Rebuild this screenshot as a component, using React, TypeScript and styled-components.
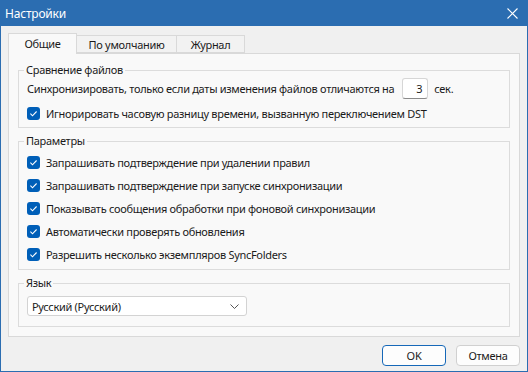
import React from 'react'
import styled, { createGlobalStyle } from 'styled-components'

const GlobalStyle = createGlobalStyle`
  html, body {
    margin: 0;
    padding: 0;
    background: #f0f0f0;
  }
  body {
    font-family: "Noto Sans", "Open Sans", sans-serif;
    font-size: 11px;
    letter-spacing: -0.3px;
    color: #1b1b1b;
  }
`

const Window = styled.div`
  width: 528px;
  height: 372px;
  box-sizing: border-box;
  display: flex;
  flex-direction: column;
  background: #f0f0f0;
  border: 1px solid #2b6db1;
  border-top: none;
`

const TitleBar = styled.div`
  height: 26px;
  margin: 0 -1px;
  padding: 0 10px 0 5px;
  display: flex;
  align-items: center;
  justify-content: space-between;
  background: #2b6db1;
  color: #fff;
  font-size: 12px;
  letter-spacing: -0.2px;
`

const CloseIcon = () => (
  <svg width="11" height="11" viewBox="0 0 11 11">
    <path d="M0.5 0.5 L10.5 10.5 M10.5 0.5 L0.5 10.5" stroke="#fff" strokeWidth="1.1" />
  </svg>
)

const Client = styled.div`
  flex: 1;
  padding: 7px 7px 0 7px;
  display: flex;
  flex-direction: column;
`

const TabStrip = styled.div`
  display: flex;
  align-items: flex-end;
  height: 20px;
  position: relative;
  z-index: 1;
`

const Tab = styled.div<{ $active?: boolean; $width: number }>`
  box-sizing: border-box;
  width: ${(p) => p.$width}px;
  height: ${(p) => (p.$active ? 21 : 18)}px;
  margin-bottom: ${(p) => (p.$active ? -1 : 0)}px;
  display: flex;
  align-items: center;
  justify-content: center;
  padding-bottom: ${(p) => (p.$active ? 1 : 0)}px;
  background: ${(p) => (p.$active ? '#f9f9f9' : '#f2f2f2')};
  border: 1px solid #d9d9d9;
  border-bottom: ${(p) => (p.$active ? 'none' : '1px solid #d9d9d9')};
  border-left: ${(p) => (p.$active ? '1px solid #d9d9d9' : 'none')};
  color: #1b1b1b;
`

const Panel = styled.div`
  box-sizing: border-box;
  height: 284px;
  padding: 9px 9px;
  background: #f9f9f9;
  border: 1px solid #d9d9d9;
  display: flex;
  flex-direction: column;
  gap: 6px;
`

const Group = styled.fieldset<{ $padTop?: number; $padBottom?: number }>`
  margin: 0;
  min-width: 0;
  padding: ${(p) => p.$padTop ?? 0}px 8px ${(p) => p.$padBottom ?? 2}px 8px;
  border: 1px solid #dcdcdc;
  display: flex;
  flex-direction: column;
`

const Caption = styled.legend`
  padding: 0 2px;
  margin-left: -3px;
  line-height: 14px;
`

const Row = styled.div<{ $gapTop?: number }>`
  height: 23px;
  margin-top: ${(p) => p.$gapTop ?? 0}px;
  display: flex;
  align-items: center;
  gap: 6px;
  white-space: nowrap;
`

const NumberBox = styled.div`
  box-sizing: border-box;
  width: 26px;
  height: 21px;
  margin-left: 2px;
  padding-right: 5px;
  display: flex;
  align-items: center;
  justify-content: flex-end;
  background: #fff;
  border: 1px solid #d6d6d6;
  border-bottom-color: #8a8a8a;
  border-radius: 3px;
`

const Box = styled.span`
  width: 13px;
  height: 13px;
  flex: none;
  border-radius: 3px;
  background: #005fb8;
  display: flex;
  align-items: center;
  justify-content: center;
`

const Check = ({ label }: { label: string }) => (
  <>
    <Box>
      <svg width="13" height="13" viewBox="0 0 13 13">
        <polyline points="3.4,6.7 5.5,8.8 9.6,4.5" fill="none" stroke="#fff" strokeWidth="1.1" />
      </svg>
    </Box>
    <span>{label}</span>
  </>
)

const Select = styled.div`
  box-sizing: border-box;
  width: 220px;
  height: 20px;
  padding: 0 7px 0 4px;
  display: flex;
  align-items: center;
  justify-content: space-between;
  background: #fff;
  border: 1px solid #d3d3d3;
  border-radius: 3px;
`

const Footer = styled.div`
  display: flex;
  justify-content: flex-end;
  gap: 10px;
  margin-top: 8px;
`

const Button = styled.div<{ $default?: boolean }>`
  box-sizing: border-box;
  width: 64px;
  height: 21px;
  display: flex;
  align-items: center;
  justify-content: center;
  background: #fdfdfd;
  border: 1px solid ${(p) => (p.$default ? '#1668b8' : '#d0d0d0')};
  border-radius: 4px;
`

const options = [
  'Запрашивать подтверждение при удалении правил',
  'Запрашивать подтверждение при запуске синхронизации',
  'Показывать сообщения обработки при фоновой синхронизации',
  'Автоматически проверять обновления',
  'Разрешить несколько экземпляров SyncFolders',
]

export default function App() {
  return (
    <>
      <GlobalStyle />
      <Window>
        <TitleBar>
          <span>Настройки</span>
          <CloseIcon />
        </TitleBar>
        <Client>
          <TabStrip>
            <Tab $active $width={69}>Общие</Tab>
            <Tab $width={100}>По умолчанию</Tab>
            <Tab $width={68}>Журнал</Tab>
          </TabStrip>
          <Panel>
            <Group $padBottom={2}>
              <Caption>Сравнение файлов</Caption>
              <Row>
                <span>Синхронизировать, только если даты изменения файлов отличаются на</span>
                <NumberBox>3</NumberBox>
                <span>сек.</span>
              </Row>
              <Row $gapTop={2}>
                <Check label="Игнорировать часовую разницу времени, вызванную переключением DST" />
              </Row>
            </Group>
            <Group $padTop={3} $padBottom={3}>
              <Caption>Параметры</Caption>
              {options.map((o) => (
                <Row key={o}>
                  <Check label={o} />
                </Row>
              ))}
            </Group>
            <Group $padTop={6} $padBottom={10}>
              <Caption>Язык</Caption>
              <Select>
                <span>Русский (Русский)</span>
                <svg width="9" height="5" viewBox="0 0 9 5">
                  <polyline points="0.5,0.5 4.5,4.5 8.5,0.5" fill="none" stroke="#555" strokeWidth="1" />
                </svg>
              </Select>
            </Group>
          </Panel>
          <Footer>
            <Button $default>OK</Button>
            <Button>Отмена</Button>
          </Footer>
        </Client>
      </Window>
    </>
  )
}
